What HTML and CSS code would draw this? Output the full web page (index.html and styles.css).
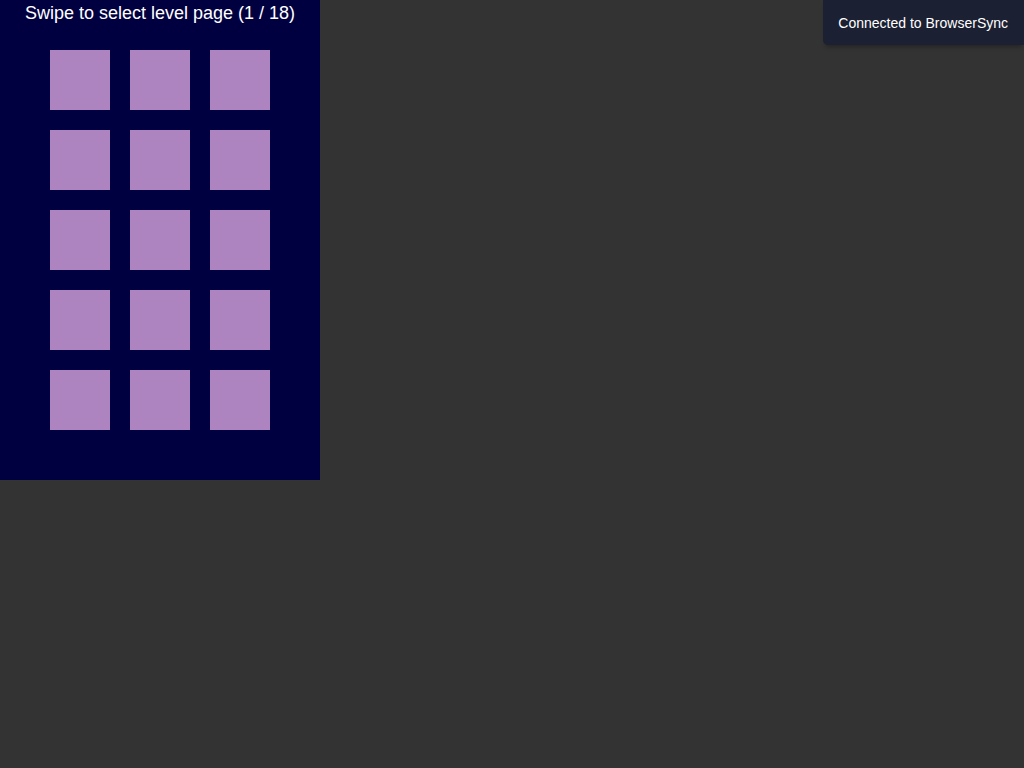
FILE: index.html
```html
<!DOCTYPE html>
<html lang="en">
<head>
<meta charset="utf-8">
<title>Level select</title>
<link rel="stylesheet" href="styles.css">
</head>
<body>
<main class="stage">
  <h1 class="title">Swipe to select level page (1 / 18)</h1>
  <div class="levels">
    <div class="level"></div><div class="level"></div><div class="level"></div>
    <div class="level"></div><div class="level"></div><div class="level"></div>
    <div class="level"></div><div class="level"></div><div class="level"></div>
    <div class="level"></div><div class="level"></div><div class="level"></div>
    <div class="level"></div><div class="level"></div><div class="level"></div>
  </div>
</main>
<div class="notify">Connected to BrowserSync</div>
</body>
</html>
```
FILE: styles.css
```css
html, body {
  margin: 0;
  padding: 0;
  background: #333333;
  height: 100%;
}
.stage {
  width: 320px;
  height: 480px;
  background: #000040;
  display: flex;
  flex-direction: column;
  align-items: center;
  box-sizing: border-box;
  padding-top: 3px;
}
.title {
  margin: 0;
  font-family: "Liberation Sans", Arial, sans-serif;
  font-size: 18px;
  font-weight: normal;
  line-height: 21px;
  color: #ffffff;
  text-align: center;
}
.levels {
  margin-top: 26px;
  display: grid;
  grid-template-columns: repeat(3, 60px);
  grid-auto-rows: 60px;
  gap: 20px;
}
.level {
  background: #ae84c0;
}
.notify {
  position: absolute;
  top: 0;
  right: 0;
  padding: 15px 16px 14px 15px;
  font-family: "Liberation Sans", Arial, sans-serif;
  font-size: 14px;
  line-height: 16px;
  color: #ffffff;
  background: #1b2032;
  border-bottom-left-radius: 5px;
  box-shadow: 0 4px 4px -2px rgba(0,0,0,0.3);
  white-space: nowrap;
}
```
